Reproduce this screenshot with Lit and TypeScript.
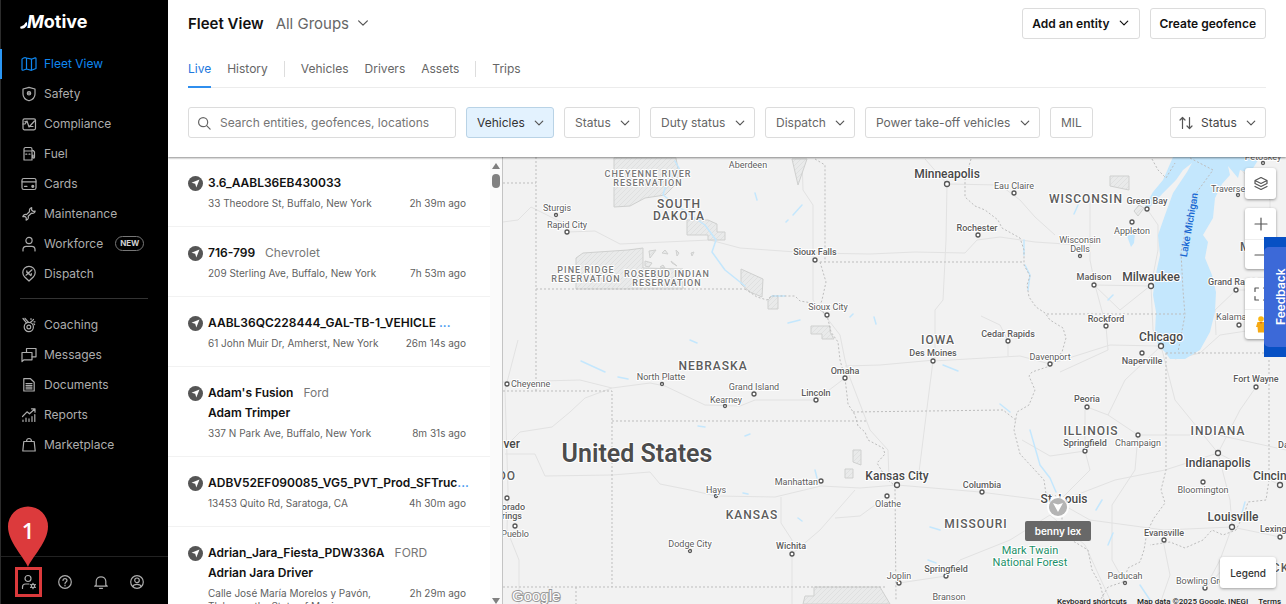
import { LitElement, html, svg, css, nothing } from "lit";
import { customElement, property } from "lit/decorators.js";
import { classMap } from "lit/directives/class-map.js";

const icons: Record<string, unknown> = {
  map: svg`<path d="M1 3.200C3 1.200 4 1.200 5.500 2L10.500 3.200 14 1.900Q15 1.700 15 2.700V12.500L10.500 14.300 5.500 13 2 14.200Q1 14.400 1 13.400zM5.500 2V13M10.500 3.200v11"/>`,
  shield: svg`<path d="M8 1.300 14 3v5c0 3.500-2.700 5.800-6 6.800C4.700 13.800 2 11.500 2 8V3z"/><circle cx="8" cy="7.300" r="1.700"/><circle cx="8" cy="7.300" r=".4"/>`,
  compliance: svg`<rect x="2" y="2.800" width="12.500" height="11" rx="1.500"/><path d="M2 8h2l2-3 2 6 5.500-6M4 5.500l1 1M9 10.500h3"/>`,
  fuel: svg`<path d="M3 14V3.200C3 2.300 3.500 1.500 4.500 1.500h5c1 0 1.500.8 1.500 1.700V14zM3 5h8M4.800 8.200h1M8 8.200h1M11 4.500h1.200l1.300 1.500v5c0 1.300-1.500 1.500-1.500 0V9"/>`,
  card: svg`<rect x="1" y="2.500" width="14" height="11" rx="1.800"/><path d="M1 5.800h14M3.500 10.300h2.500"/><circle cx="11.800" cy="10.300" r="1" fill="currentColor"/>`,
  wrench: svg`<path d="M10.700 1.700c-1.800.5-2.700 2-2.100 3.800L5.500 8.600C3.700 8 2.200 8.900 1.800 10.600l2.200-.2 1.300 1.400-.2 2.300c1.800-.5 2.700-2 2.100-3.800l3.200-3.100c1.800.6 3.300-.3 3.800-2.100l-2.200.2-1.400-1.300z"/>`,
  person: svg`<circle cx="8" cy="4.500" r="3.100"/><path d="M2 15v-1.500c0-2 1.300-3.200 3.200-3.200h5.600c1.900 0 3.200 1.200 3.200 3.200V15"/>`,
  dispatch: svg`<path d="M8 15 3.700 11A6.200 6.200 0 1 1 12.300 11z"/><path d="M5 9.200 11 3.800M6 6l3.800 3.500M5.800 4.800v1.500h1.300M10.300 7.500v1.500H9"/>`,
  coaching: svg`<circle cx="7.800" cy="10" r="4.600"/><circle cx="7.800" cy="10" r="1.900"/><path d="M2 1.500 5.500 5.800M4 1.300l3.500 4M9.500 5.300l1.800-1.500M10 1.500v1M12.500 2.500l-.8.8M14 4.800h-1M12.800 6.800l.8.700"/>`,
  messages: svg`<path d="M5.500 5.500v-4h9.500v8.300h-4"/><path d="M1 5.500h10v7.300H3L1 14.500z"/>`,
  document: svg`<path d="M2.800 1.700h6.700l3.700 3.500V14H2.800z"/><path d="M5 6.500h6M5 8.300h6M5 10.100h6M5 11.900h6"/>`,
  reports: svg`<path d="M1.500 9.500 6 4.800l2.500 2L13.800 2M10.500 1.800h3.500v3.400M2 14.500V13M5 14.500v-3.300M8 14.500v-2.700M11 14.500V9.500M13.800 14.500V7.500"/>`,
  bag: svg`<path d="M2.800 4.500h10.400l1 9.500H1.800zM5.500 4.500c0-4 5-4 5 0"/>`,
  admin: svg`<circle cx="7" cy="4.500" r="3"/><path d="M1.500 14.500V13c0-1.800 1.200-3 3-3H8"/><circle cx="12" cy="12" r="1.700"/><path d="M12 9.300v1M12 13.700v1M9.600 10.600l.9.500M13.500 12.900l.9.500M9.600 13.400l.9-.5M13.500 11.100l.9-.5"/>`,
  help: svg`<circle cx="8" cy="8" r="6.300"/><path d="M6 6.500c0-2.600 4-2.600 4 0 0 1.500-2 1.500-2 3M8 11.200v.6"/>`,
  bell: svg`<path d="M3.200 11V7.300c0-6 9.600-6 9.600 0V11l1.500 1.200H1.700zM6.500 14.300h3"/>`,
  account: svg`<circle cx="8" cy="8" r="6.300"/><circle cx="8" cy="6.300" r="2.300"/><path d="M4 12.600c.3-3 7.700-3 8 0"/>`,
  search: svg`<circle cx="7" cy="7" r="5.200"/><path d="m11 11 4 4"/>`,
  chevron: svg`<path d="m3 5.500 5 5 5-5"/>`,
  sort: svg`<path d="M4.500 13.500v-11M2 5l2.500-2.500L7 5M11.500 2.500v11M9 11l2.500 2.500L14 11"/>`,
  layers: svg`<path d="m8 1.500 6 3-6 3-6-3zM2 7.500l6 3 6-3M2 10.500l6 3 6-3M2 4.500v3M14 4.500v3"/>`,
  plus: svg`<path d="M8 0v16M0 8h16"/>`,
  minus: svg`<path d="M0 8h16"/>`,
  expand: svg`<path d="M2 5.500V2h3.500M10.500 2H14v3.500M14 10.500V14h-3.500M5.500 14H2v-3.500"/>`,
};

const icon = (name: string, size = "") =>
  html`<svg class="icon ${size}" viewBox="0 0 16 16" aria-hidden="true">${icons[name]}</svg>`;

const iconStyles = css`
  .icon { width: 16px; height: 16px; flex: none; fill: none; stroke: currentColor; stroke-width: 1.2; stroke-linecap: round; stroke-linejoin: round; overflow: visible; }
  .icon.small { width: 12px; height: 12px; stroke-width: 1.6; }
  .icon.mid { width: 14px; height: 14px; stroke-width: 1.4; }
`;

@customElement("side-nav")
class SideNav extends LitElement {
  static styles = [iconStyles, css`
    :host { display: flex; flex-direction: column; box-sizing: border-box; width: 168px; flex: none; background: #000; color: #adadad; border-left: 1px solid #2c2c2c; font-size: 12px; line-height: 30px; }
    .logo { display: flex; align-items: center; height: 48px; padding: 0 20px 4px 19px; box-sizing: border-box; color: #fff; font-weight: 700; font-size: 18px; }
    .swash { width: 7px; height: 13px; fill: none; stroke: #fff; stroke-width: 2.6; stroke-linecap: round; }
    .initial { font-style: italic; }
    ul { list-style: none; margin: 0; padding: 0; }
    nav { padding-top: 1px; }
    a { display: flex; align-items: center; gap: 7px; height: 29px; padding: 0 0 1px 20px; color: inherit; text-decoration: none; }
    .active { color: #0f87f0; border-left: 2px solid #2b97f5; margin-left: -1px; padding-left: 19px; }
    .badge { margin-left: 5px; padding: 0 4px; border: 1px solid #777; border-radius: 8px; font-size: 8px; font-weight: 700; line-height: 13px; color: #d0d0d0; }
    hr { border: 0; height: 1px; background: #333; margin: 9px 20px 11px 19px; }
    footer { display: flex; gap: 20px; margin-top: auto; padding: 17px 0 14px 20px; border-top: 1px solid #222; }
    footer button { display: flex; padding: 0; border: 0; background: none; color: inherit; }
  `];

  private items = [
    ["map", "Fleet View"], ["shield", "Safety"], ["compliance", "Compliance"], ["fuel", "Fuel"],
    ["card", "Cards"], ["wrench", "Maintenance"], ["person", "Workforce"], ["dispatch", "Dispatch"],
  ];
  private more = [
    ["coaching", "Coaching"], ["messages", "Messages"], ["document", "Documents"],
    ["reports", "Reports"], ["bag", "Marketplace"],
  ];

  private item = ([name, label]: string[]) => html`<li><a href="#" class=${classMap({ active: label === "Fleet View" })}>
    ${icon(name)}<span>${label}</span>${label === "Workforce" ? html`<span class="badge">NEW</span>` : nothing}</a></li>`;

  render() {
    return html`
      <div class="logo"><svg class="swash" viewBox="0 0 7 13" aria-hidden="true"><path d="M1.500 11.500c2.500 0 3.500-1 5-4"/></svg><span class="initial">M</span><span>otive</span></div>
      <nav><ul>${this.items.map(this.item)}</ul><hr /><ul>${this.more.map(this.item)}</ul></nav>
      <footer>
        <button aria-label="Admin settings">${icon("admin")}</button>
        <button aria-label="Help">${icon("help")}</button>
        <button aria-label="Notifications">${icon("bell")}</button>
        <button aria-label="Account">${icon("account")}</button>
      </footer>`;
  }
}

@customElement("drop-down")
class DropDown extends LitElement {
  @property() label = "";
  @property() kind = "";
  static styles = [iconStyles, css`
    :host { display: block; }
    .wrap { display: grid; align-items: center; }
    .wrap > * { grid-area: 1 / 1; }
    select { appearance: none; box-sizing: border-box; height: 31px; margin: 0; padding: 0 28px 0 10px; border: 1px solid #dcdcdc; border-radius: 3px; background: #fff; color: #666; font: 12px Inter, sans-serif; }
    .chev { justify-self: end; display: flex; margin-right: 9px; pointer-events: none; color: #555; }
    .lead { justify-self: start; display: flex; margin-left: 8px; z-index: 1; pointer-events: none; color: #555; }
    .on select { background: #e3f2fe; border-color: #b9d3e6; color: #333; }
    .sort select { padding-left: 30px; color: #444; }
    .title select { border: 0; height: 30px; padding: 0 20px 0 0; font-size: 15px; }
    .title .chev { margin-right: 0; }
  `];
  render() {
    return html`<div class="wrap ${this.kind}">
      ${this.kind === "sort" ? html`<span class="lead">${icon("sort")}</span>` : nothing}
      <select aria-label=${this.label}><option>${this.label}</option></select>
      <span class="chev">${icon("chevron", this.kind === "title" ? "mid" : "small")}</span>
    </div>`;
  }
}

@customElement("fleet-header")
class FleetHeader extends LitElement {
  static styles = [iconStyles, css`
    :host { display: block; position: relative; z-index: 2; padding: 8px 20px 19px; background: #fff; box-shadow: 0 1px 2px rgba(0, 0, 0, .45); }
    .top { display: flex; align-items: center; gap: 10px; height: 30px; }
    h1 { margin: 0 2px 0 0; font-size: 15px; font-weight: 600; color: #111; }
    .push { margin-left: auto; }
    button { display: flex; align-items: center; gap: 8px; height: 31px; box-sizing: border-box; padding: 0 10px; border: 1px solid #dcdcdc; border-radius: 3px; background: #fff; color: #666; font: 12px Inter, sans-serif; white-space: nowrap; }
    .top button { padding: 0 9px; font-weight: 600; color: #111; }
    .tabs { display: flex; align-items: center; gap: 16px; margin-top: 12px; height: 38px; box-shadow: inset 0 -1px #ececec; }
    .tabs a { display: flex; align-items: center; height: 38px; box-sizing: border-box; border-bottom: 2px solid transparent; color: #666; font-size: 12px; text-decoration: none; }
    .tabs .active { color: #2178dd; border-bottom-color: #2f8eee; }
    .sep { width: 1px; height: 16px; background: #ddd; }
    .filters { display: flex; align-items: center; gap: 10px; margin-top: 19px; }
    .search { display: flex; align-items: center; gap: 9px; width: 268px; height: 31px; box-sizing: border-box; padding: 0 8px; border: 1px solid #dcdcdc; border-radius: 3px; color: #666; }
    input { flex: 1; min-width: 0; border: 0; padding: 0; outline: 0; background: none; font: 12px Inter, sans-serif; }
    input::placeholder { color: #757575; opacity: 1; }
  `];
  render() {
    return html`
      <div class="top"><h1>Fleet View</h1><drop-down kind="title" label="All Groups"></drop-down>
        <button class="push">Add an entity ${icon("chevron", "small")}</button><button>Create geofence</button></div>
      <nav class="tabs"><a class="active" href="#">Live</a><a href="#">History</a><span class="sep"></span>
        <a href="#">Vehicles</a><a href="#">Drivers</a><a href="#">Assets</a><span class="sep"></span><a href="#">Trips</a></nav>
      <div class="filters">
        <label class="search">${icon("search", "mid")}<input type="text" aria-label="Search" placeholder="Search entities, geofences, locations" /></label>
        <drop-down kind="on" label="Vehicles"></drop-down><drop-down label="Status"></drop-down>
        <drop-down label="Duty status"></drop-down><drop-down label="Dispatch"></drop-down>
        <drop-down label="Power take-off vehicles"></drop-down><button>MIL</button>
        <drop-down class="push" kind="sort" label="Status"></drop-down>
      </div>`;
  }
}

interface Vehicle { name: string; more?: boolean; make?: string; driver?: string; place: string; ago: string }

const vehicles: Vehicle[] = [
  { name: "3.6_AABL36EB430033", place: "33 Theodore St, Buffalo, New York", ago: "2h 39m ago" },
  { name: "716-799", make: "Chevrolet", place: "209 Sterling Ave, Buffalo, New York", ago: "7h 53m ago" },
  { name: "AABL36QC228444_GAL-TB-1_VEHICLE ", more: true, place: "61 John Muir Dr, Amherst, New York", ago: "26m 14s ago" },
  { name: "Adam's Fusion", make: "Ford", driver: "Adam Trimper", place: "337 N Park Ave, Buffalo, New York", ago: "8m 31s ago" },
  { name: "ADBV52EF090085_VG5_PVT_Prod_SFTruc", more: true, place: "13453 Quito Rd, Saratoga, CA", ago: "4h 30m ago" },
  { name: "Adrian_Jara_Fiesta_PDW336A", make: "FORD", driver: "Adrian Jara Driver", place: "Calle José María Morelos y Pavón, Tlalnepantla, State of Mexico", ago: "2h 29m ago" },
];

@customElement("vehicle-list")
class VehicleList extends LitElement {
  static styles = css`
    :host { display: flex; width: 335px; flex: none; box-sizing: border-box; border-right: 1px solid #c4c4c4; background: #fff; overflow: hidden; }
    ul { flex: 1; min-width: 0; margin: 0; padding: 0; list-style: none; overflow: hidden; }
    li { display: grid; grid-template-columns: 15px minmax(0, 1fr); column-gap: 5px; padding: 16px 24px 13px 20px; border-bottom: 1px solid #f2f2f2; }
    .pin { width: 15px; height: 15px; margin-top: 3px; }
    .name { font-size: 12px; font-weight: 600; line-height: 20px; color: #111; white-space: pre; }
    .name a { color: #2f8eee; text-decoration: none; }
    .make { margin-left: 10px; font-weight: 400; color: #777; }
    .where { display: flex; justify-content: space-between; gap: 12px; padding: 4px 0 3px; font-size: 10px; line-height: 13px; color: #5f5f5f; }
    .ago { white-space: nowrap; }
    .bar { display: flex; flex-direction: column; align-items: center; width: 12px; padding: 6px 0 0; background: #fafafa; }
    .bar svg { width: 8px; height: 6px; fill: #808080; }
    .thumb { width: 8px; height: 14px; margin-top: 5px; border-radius: 4px; background: #808080; }
    .down { margin-top: auto; }
  `;
  render() {
    return html`<ul>${vehicles.map((v) => html`<li>
        <svg class="pin" viewBox="0 0 15 15" aria-hidden="true"><circle cx="7.500" cy="7.500" r="7.500" fill="#555"/><path d="M11.500 3.500 8.300 11.500 7.200 7.800 3.500 6.700z" fill="#fff"/></svg>
        <div>
          <div class="name">${v.name}${v.more ? html`<a href="#">...</a>` : nothing}${v.make ? html`<span class="make">${v.make}</span>` : nothing}</div>
          ${v.driver ? html`<div class="name">${v.driver}</div>` : nothing}
          <div class="where"><span>${v.place}</span><span class="ago">${v.ago}</span></div>
        </div></li>`)}</ul>
      <div class="bar"><svg viewBox="0 0 8 6"><path d="M4 0 8 6H0z"/></svg><div class="thumb"></div><svg class="down" viewBox="0 0 8 6"><path d="M4 6 0 0h8z"/></svg></div>`;
  }
}

type Label = [text: string, x: number, y: number, kind: string, anchor?: string];
const labels: Label[] = [
  ["CHEYENNE RIVER", 648, 174, "land"], ["RESERVATION", 648, 183, "land"],
  ["SOUTH", 679, 204, "state"], ["DAKOTA", 679, 216, "state"],
  ["Sturgis", 557, 208, "town"], ["Rapid City", 567, 225, "town"],
  ["PINE RIDGE", 586, 270, "land"], ["RESERVATION", 586, 279, "land"],
  ["ROSEBUD INDIAN", 667, 274, "land"], ["RESERVATION", 667, 283, "land"],
  ["Aberdeen", 748, 165, "town"], ["NEBRASKA", 713, 366, "state"], ["North Platte", 661, 377, "town"],
  ["Minneapolis", 947, 174, "metro"], ["Eau Claire", 1014, 186, "town"], ["Rochester", 977, 228, "city"],
  ["Sioux Falls", 815, 252, "city"], ["Sioux City", 828, 307, "town"], ["IOWA", 938, 340, "state"],
  ["Des Moines", 933, 353, "city"], ["Cedar Rapids", 1008, 334, "city"], ["Omaha", 845, 371, "city"],
  ["WISCONSIN", 1086, 199, "state"], ["Green Bay", 1147, 201, "city"], ["Appleton", 1132, 231, "town"],
  ["Wisconsin", 1080, 240, "town"], ["Dells", 1080, 249, "town"], ["Madison", 1094, 277, "city"],
  ["Milwaukee", 1151, 277, "metro"], ["Rockford", 1106, 319, "city"], ["Chicago", 1161, 337, "metro"],
  ["Naperville", 1142, 361, "city"], ["Davenport", 1050, 357, "town"],
  ["Traverse City", 1211, 189, "town", "start"], ["Petoskey", 1263, 157, "town"], ["Grand Rapids", 1208, 282, "city", "start"],
  ["Kalamazoo", 1216, 317, "town", "start"], ["Fort Wayne", 1256, 379, "city"], ["MICHIGAN", 1240, 247, "state", "start"],
  ["Cheyenne", 511, 384, "town", "start"], ["Grand Island", 754, 387, "town"], ["Kearney", 726, 400, "town"],
  ["Lincoln", 816, 393, "city"], ["Denver", 520, 444, "metro", "end"], ["COLORADO", 516, 476, "state", "end"],
  ["Colorado", 525, 507, "city", "end"], ["Springs", 522, 516, "city", "end"], ["Pueblo", 529, 534, "town", "end"],
  ["United States", 637, 453, "country"], ["Hays", 716, 490, "town"], ["Manhattan", 818, 482, "town", "end"],
  ["KANSAS", 752, 515, "state"], ["Dodge City", 690, 544, "town"], ["Wichita", 791, 546, "city"],
  ["Kansas City", 897, 476, "metro"], ["Olathe", 888, 504, "town"], ["Columbia", 982, 485, "city"],
  ["St. Louis", 1064, 499, "metro"], ["MISSOURI", 976, 524, "state"], ["Springfield", 946, 569, "city"],
  ["Joplin", 899, 576, "town"], ["Branson", 949, 597, "town"],
  ["Mark Twain", 1030, 550, "park"], ["National Forest", 1030, 562, "park"],
  ["Peoria", 1087, 399, "city"], ["ILLINOIS", 1091, 431, "state"], ["Springfield", 1085, 443, "city"],
  ["Champaign", 1138, 443, "town"], ["INDIANA", 1218, 431, "state"], ["Indianapolis", 1218, 463, "metro"],
  ["Bloomington", 1203, 490, "town"], ["Cincinnati", 1253, 476, "metro", "start"], ["Louisville", 1233, 517, "metro"],
  ["Lexington", 1260, 529, "city", "start"], ["Evansville", 1164, 533, "city"], ["Paducah", 1125, 576, "town"],
  ["Bowling Green", 1176, 581, "town", "start"], ["Dayton", 1278, 445, "city", "start"], ["KENTUCKY", 1229, 568, "state", "start"],
];

const dots: [number, number, number][] = [
  [556, 215, 1.5], [567, 232, 2], [662, 384, 1.5], [947, 184, 2.5], [1014, 193, 2], [978, 235, 2], [815, 260, 2], [827, 315, 2],
  [933, 361, 2], [1008, 341, 2], [845, 378, 2], [1147, 209, 2], [1132, 222, 2], [1080, 256, 1.5], [1094, 285, 2], [1151, 286, 2.5],
  [1106, 326, 2], [1161, 346, 2.5], [1142, 353, 2], [1050, 364, 2], [1238, 195, 1.5], [1263, 163, 1.5], [1236, 290, 2], [1239, 325, 2], [1256, 387, 2],
  [507, 384, 2], [754, 394, 2], [725, 406, 1.5], [816, 400, 2], [507, 498, 2], [515, 526, 2], [716, 496, 1.5], [821, 481, 2],
  [690, 551, 1.5], [792, 554, 2], [897, 485, 2.5], [887, 496, 2], [982, 492, 2], [946, 576, 2], [899, 583, 2], [1087, 407, 2],
  [1085, 451, 2], [1138, 435, 2], [1218, 453, 2.5], [1203, 482, 2], [1280, 485, 2.5], [1232, 527, 2.5], [1280, 537, 2],
  [1164, 540, 2], [1125, 583, 1.5], [1205, 588, 2],
];

const borders = [
  "M536 157V391M503 183H536M503 391H612V587M503 587H886M576 587V604M612 421H866M536 289H745",
  "M745 289 757 297 767 300 771 296 795 296 800 301 812 303 820 310 827 315 831 332 838 342 840 360 845 378 848 404 855 415 858 426 865 432 868 440 883 448 885 454 877 463 886 478 895 486 896 600",
  "M815 159 825 165V262M820 262H1024M820 262 823 272 826 282 822 300 819 308 827 315",
  "M971 159 965 180V197L975 206 985 210 998 220 1002 228 1020 238 1024 250V265L1030 276 1027 285 1029 297 1036 307 1045 313 1050 320 1063 328 1066 338 1062 352 1050 366 1032 372 1029 376 1035 390 1029 405 1017 412 1014 430 1020 454 1033 468 1044 480 1046 494 1056 496 1062 508 1062 525 1073 541 1088 550 1092 570 1100 584 1105 604",
  "M853 412 1003 410 1017 421M1047 314H1184M1166 353H1286M1166 353V470L1161 490 1165 503 1154 518 1147 532 1144 550 1140 562 1128 568 1123 582 1108 587 1098 604",
  "M1269 360V480L1266 500 1248 502 1245 512 1236 530 1223 535 1212 530 1203 540 1185 548 1170 542 1150 545",
  "M1152 159 1158 170 1166 178 1175 163M1190 158 1213 170 1197 192 1189 215 1181 252 1183 290 1185 315 1178 352",
];

const roads = [
  "M503 222 518 220 531 207 567 225M567 232 595 231 620 244 710 240 740 248 810 253 870 254 915 252 965 253 977 240 1000 237 1035 242 1080 245",
  "M503 382 580 380 612 388 650 383 665 386 705 405 740 406 755 400 816 400 845 378",
  "M512 440 520 432 552 427 570 412 585 398 612 388M505 454 535 454 545 476 612 475 650 472 660 484 690 490 716 496 775 497 821 486 860 488 897 485",
  "M781 497V523L792 540 792 604M792 554 820 530 855 490M835 518 860 516 875 505M518 340 505 390 508 490 507 530 519 560 519 604",
  "M802 159 803 190 813 205 813 300 840 335 845 360 850 378 870 430 888 450 889 480M925 159 947 184 946 240 943 300 935 310V360L880 365 845 366M947 184 1000 185 1020 200 1035 217 1055 235",
  "M897 485 980 492 1058 502M933 361 1020 356 1050 364M933 361 928 400 918 480M1008 341 1008 356M981 316 1000 325 1008 341",
  "M1090 200 1090 260 1095 285 1106 326 1108 350 1060 372M1094 285 1151 286M1094 285 1120 310 1150 286M1147 209 1158 225 1158 250 1151 286 1153 330 1161 346 1175 359 1200 353 1220 335 1286 325",
  "M1161 346 1110 345 1050 364M1058 502 1090 470 1085 451 1085 410M1058 502 1115 480 1165 470 1218 453M1087 407 1108 415 1138 435 1218 435 1286 450M1108 415 1125 380 1161 346M1161 346 1175 400 1218 453M1218 453 1240 410 1256 387",
  "M1218 453 1230 500 1232 527 1220 560 1205 588M1218 453 1260 475 1280 485M1138 435 1135 470 1112 505 1112 560 1125 583M1058 502 1090 520 1164 530 1232 527M1058 510 1010 540 960 560 946 576 899 583M1050 515 1085 545 1112 604",
  "M1022 440 1050 456 1085 451M1163 540 1170 575 1160 604M1232 527 1280 537M1205 588 1232 560M1232 160 1270 200 1270 240M1236 290 1215 310 1216 335M1236 290 1286 290",
];

const water = [
  "M675 161 680 170 668 178 663 195 690 215 705 225 716 240 712 252 725 270 745 286",
  "M772 296 785 296M1024 240 1024 255M1025 265 1030 275 1028 290M1030 430 1040 465 1050 478 1056 492M1245 502 1240 520",
  "M581 361 605 372M618 377 628 379M690 340 697 343M788 323 800 320M755 193 757 200M786 222 788 220M793 215 802 205M850 317 853 314M874 317 876 324M943 365 958 371",
  "M698 426 705 427M745 436 750 434M743 493 748 494M817 478 815 470M798 518 802 521M1000 404 1010 412M1096 510 1102 500M928 560 936 563M1108 545 1113 533M930 527 940 530M1140 585 1150 600M1074 214 1078 205M1108 300 1113 295",
];

const reservations = [
  "M614 158V207L630 206 645 198 665 195 680 180 676 158z",
  "M687 220 708 220 717 224V232H725V240H708V235H687z",
  "M576 258 583 253 628 250 643 248V268L683 269V289H576z",
  "M741 269 763 279 762 297 750 292 741 284zM768 300 772 296H778V309H768z",
  "M811 326H830V332L834 339H822V334H811zM792 159H807L798 185z",
  "M1110 176H1129V190L1110 186zM1134 211 1139 205 1144 208 1138 216z",
  "M853 450H861V465L853 462zM845 469H853V478H845zM814 587H880L890 604H803L805 596H814z",
  "M649 251 656 250 650 258zM662 253 665 250 668 254zM676 250 679 253 677 256zM691 253 694 252 692 256zM671 261 677 266 672 263zM645 261 652 263 649 267 645 266zM660 267 663 265 665 268z",
];

@customElement("fleet-map")
class FleetMap extends LitElement {
  static styles = [iconStyles, css`
    :host { display: block; position: relative; flex: 1; min-width: 0; background: #f2f2f2; overflow: hidden; }
    .canvas { position: absolute; inset: 0; width: 100%; height: 100%; font-family: Roboto, sans-serif; }
    .border { fill: none; stroke: #bdbdbd; stroke-dasharray: 2 2; }
    .road { fill: none; stroke: #e2e2e2; stroke-linejoin: round; }
    .lake { fill: #c4e7fd; }
    .stream { fill: none; stroke: #c4e7fd; stroke-width: 1.5; stroke-linecap: round; stroke-linejoin: round; }
    .area { fill: url(#hatch); stroke: #cfd0cf; }
    .dot { fill: #fff; stroke: #555; stroke-width: 1.3; }
    .label { fill: #5c5c5c; stroke: #fff; stroke-width: 2px; stroke-linejoin: round; paint-order: stroke; text-anchor: middle; dominant-baseline: central; font-size: 9px; }
    .label.start { text-anchor: start; }
    .label.end { text-anchor: end; }
    .city { font-weight: 500; }
    .metro { font-size: 12px; font-weight: 500; fill: #484848; }
    .state { font-size: 12px; font-weight: 500; letter-spacing: 1px; }
    .land { font-size: 9px; font-weight: 500; letter-spacing: 1px; fill: #777; }
    .country { font-size: 25px; font-weight: 600; fill: #4c4c4c; }
    .park { font-size: 11px; fill: #1c9069; }
    .sea { font-size: 10px; fill: #1967d2; stroke: none; font-weight: 500; }
    .google { fill: #fff; stroke: #999; stroke-width: 2px; paint-order: stroke; font: 500 15px "Liberation Sans", sans-serif; }
    .tag { fill: #686868; }
    .tagtext { fill: #fff; text-anchor: middle; dominant-baseline: central; font: 600 10px Inter, sans-serif; }
    .tools { position: absolute; top: 11px; right: 10px; display: flex; flex-direction: column; gap: 9px; }
    .group { display: flex; flex-direction: column; border-radius: 3px; background: #fff; box-shadow: 0 1px 3px rgba(0, 0, 0, .4); }
    .group button { display: flex; align-items: center; justify-content: center; width: 31px; height: 31px; padding: 0; border: 0; background: none; color: #555; }
    .group button + button { border-top: 1px solid #eee; height: 30px; }
    .guy { width: 12px; height: 17px; }
    .feedback { position: absolute; top: 80px; right: 0; width: 22px; height: 120px; padding: 10px 0; border: 0; background: #0750c4; overflow: hidden; }
    .feedback span { display: block; box-sizing: border-box; width: 34px; height: 100px; padding-right: 4px; border-radius: 5px; background: #3c69d8; color: #fff; font: 600 12px/26px Inter, sans-serif; text-align: center; writing-mode: vertical-rl; transform: rotate(180deg); }
    .legend { position: absolute; right: 10px; bottom: 16px; height: 31px; padding: 0 10px; border: 0; border-radius: 3px; background: #fff; box-shadow: 0 1px 3px rgba(0, 0, 0, .35); color: #333; font: 500 10px Inter, sans-serif; }
    .credit { position: absolute; right: 5px; bottom: -5px; display: flex; gap: 10px; font: 500 8px/14px Roboto, sans-serif; color: #222; white-space: nowrap; }
    .credit a { color: inherit; text-decoration: none; }
  `];
  render() {
    return html`
      <svg class="canvas" viewBox="503 157 783 447" preserveAspectRatio="xMidYMid slice" role="img" aria-label="Fleet map">
        <defs><pattern id="hatch" width="5" height="5" patternUnits="userSpaceOnUse"><rect width="5" height="5" fill="#e9eaea"/><path d="M0 5 5 0" stroke="#dfe0e0"/></pattern></defs>
        ${roads.map((d) => svg`<path class="road" d=${d}/>`)}
        ${reservations.map((d) => svg`<path class="area" d=${d}/>`)}
        <path class="lake" d="M1173 157 1163 180 1153 192 1145 206 1150 207 1163 193 1176 180 1183 170 1192 163 1187 172 1173 193 1165 215 1158 235 1160 255 1155 278 1153 295 1156 312 1155 332 1158 345 1165 352 1170 359H1185L1200 350 1210 332 1215 312 1216 292 1212 275 1205 258 1208 242 1203 235 1213 218 1215 198 1222 184 1230 175 1228 166 1238 178 1240 170 1250 173 1260 157z"/>
        <path class="lake" d="M1127 236 1135 233 1134 243 1131 247z"/>
        ${water.map((d) => svg`<path class="stream" d=${d}/>`)}
        ${borders.map((d) => svg`<path class="border" d=${d}/>`)}
        ${dots.map(([x, y, r]) => svg`<circle class="dot" cx=${x} cy=${y} r=${r}/>`)}
        ${labels.map(([t, x, y, k, a]) => svg`<text class="label ${k} ${a ?? ""}" x=${x} y=${y}>${t}</text>`)}
        <text class="label sea" transform="translate(1189 225) rotate(-80)">Lake Michigan</text>
        <text class="google" x="512" y="601">Google</text>
        <circle cx="1058" cy="507" r="11" fill="#fff" opacity=".8"/><circle cx="1058" cy="507" r="9" fill="#b4b4b4"/>
        <path d="m1053 503 5 1.500 5-1.500-5 9z" fill="#fff"/>
        <rect class="tag" x="1025" y="521" width="66" height="20" rx="2"/>
        <text class="tagtext" x="1058" y="531">benny lex</text>
      </svg>
      <div class="tools">
        <div class="group"><button aria-label="Layers">${icon("layers")}</button></div>
        <div class="group"><button aria-label="Zoom in">${icon("plus", "small")}</button><button aria-label="Zoom out">${icon("minus", "small")}</button></div>
        <div class="group"><button aria-label="Full screen">${icon("expand")}</button>
          <button aria-label="Street View"><svg class="guy" viewBox="0 0 12 17"><circle cx="6" cy="3" r="2.800" fill="#fbb713"/><path d="M2.500 6h7L11 11H9.500L9 16.500H3L2.500 11H1z" fill="#f6a912"/><path d="M4.500 6 6 8 7.500 6z" fill="#d96b1c"/></svg></button></div>
      </div>
      <button class="feedback"><span>Feedback</span></button>
      <button class="legend">Legend</button>
      <div class="credit"><a href="#">Keyboard shortcuts</a><span>Map data ©2025 Google, INEGI</span><a href="#">Terms</a></div>`;
  }
}

@customElement("app-root")
class AppRoot extends LitElement {
  static styles = css`
    :host { display: flex; position: relative; height: 100vh; overflow: hidden; font-family: Inter, sans-serif; background: #fff; }
    main { display: flex; flex-direction: column; flex: 1; min-width: 0; }
    .body { display: flex; flex: 1; min-height: 0; }
    .callout { position: absolute; left: 8px; bottom: 7px; z-index: 3; width: 40px; pointer-events: none; }
    .callout svg { display: block; width: 40px; height: 61px; }
    .number { fill: #fff; font: 600 22px "Open Sans", sans-serif; text-anchor: middle; }
    .frame { box-sizing: border-box; width: 27px; height: 30px; margin: 0 auto 0 7px; border: 3px solid #dc3a3c; }
  `;
  render() {
    return html`<side-nav></side-nav>
      <main><fleet-header></fleet-header><div class="body"><vehicle-list></vehicle-list><fleet-map></fleet-map></div></main>
      <div class="callout"><svg viewBox="0 0 40 61"><path d="M20 61C16 51 0 36 0 20.500A20 20 0 0 1 40 20.500C40 36 24 51 20 61z" fill="#dc3a3c"/><text class="number" x="20" y="33">1</text></svg><div class="frame"></div></div>`;
  }
}
